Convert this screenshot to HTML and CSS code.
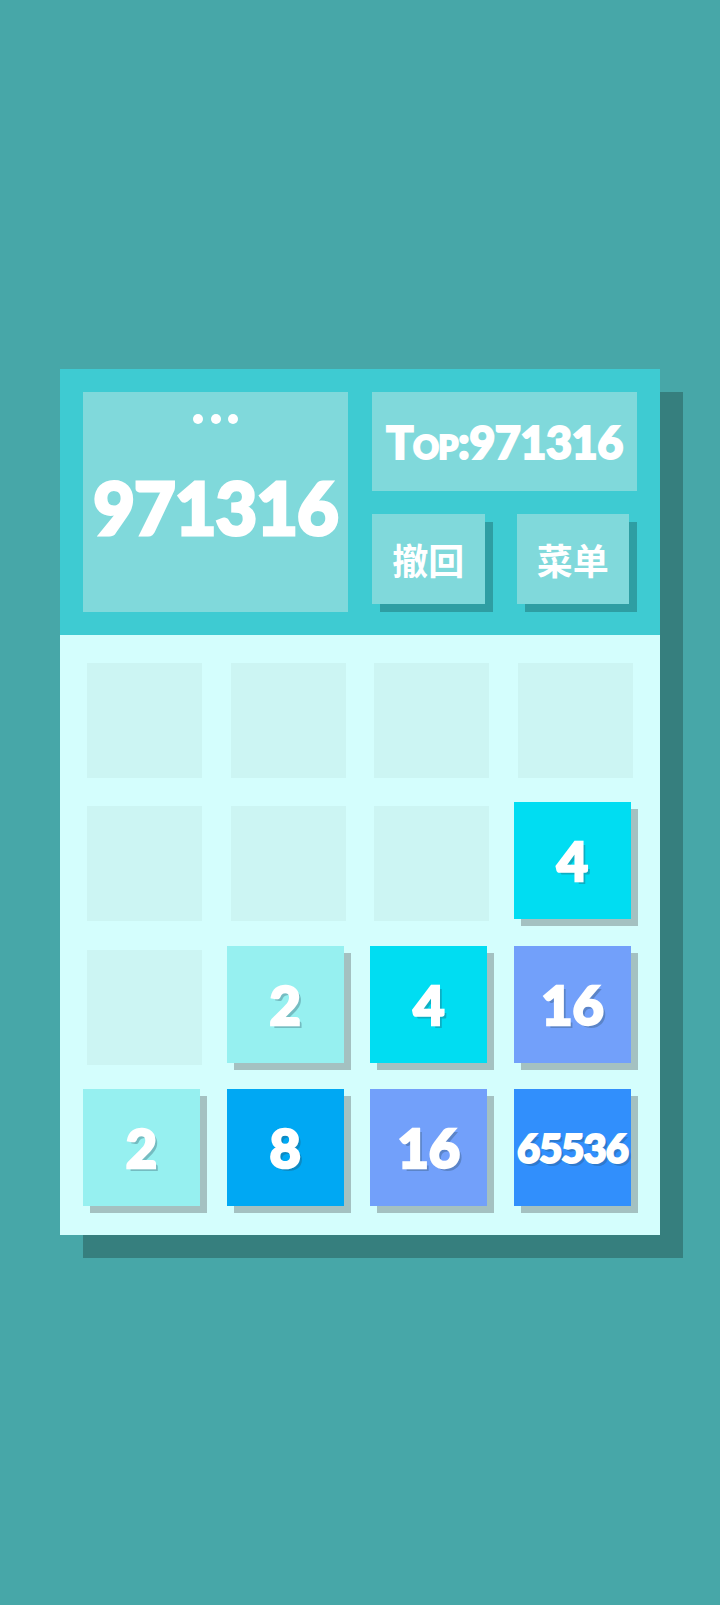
FILE: index.html
```html
<!DOCTYPE html>
<html lang="zh">
<head>
<meta charset="utf-8">
<title>2048</title>
<link rel="stylesheet" href="styles.css">
</head>
<body>
<div class="panel">
  <div class="header">
    <div class="score-box">
      <div class="dots"><span></span><span></span><span></span></div>
      <div class="score">971316</div>
    </div>
    <div class="side">
      <div class="top-box">Top:971316</div>
      <div class="buttons">
        <div class="btn">撤回</div>
        <div class="btn">菜单</div>
      </div>
    </div>
  </div>
  <div class="board">
    <div class="cell"></div>
    <div class="cell"></div>
    <div class="cell"></div>
    <div class="cell"></div>

    <div class="cell"></div>
    <div class="cell"></div>
    <div class="cell"></div>
    <div class="cell filled"><div class="tile t4">4</div></div>

    <div class="cell"></div>
    <div class="cell filled"><div class="tile t2">2</div></div>
    <div class="cell filled"><div class="tile t4">4</div></div>
    <div class="cell filled"><div class="tile t16">16</div></div>

    <div class="cell filled"><div class="tile t2">2</div></div>
    <div class="cell filled"><div class="tile t8">8</div></div>
    <div class="cell filled"><div class="tile t16">16</div></div>
    <div class="cell filled"><div class="tile t65536">65536</div></div>
  </div>
</div>
</body>
</html>
```

FILE: styles.css
```css
html, body {
  margin: 0;
  padding: 0;
}
body {
  background: #47a7a8;
  min-height: 1605px;
  padding: 369px 0 0 60px;
  box-sizing: border-box;
  font-family: "Lato", "Open Sans", "Noto Sans CJK SC", sans-serif;
}
.panel {
  width: 600px;
  box-shadow: 23px 23px 0 #367f7e;
}
.header {
  background: #3ecbd2;
  display: grid;
  grid-template-columns: 265px 265px;
  column-gap: 24px;
  padding: 23px;
  height: 266px;
  box-sizing: border-box;
}
.score-box {
  background: #80d9db;
  display: flex;
  flex-direction: column;
  align-items: center;
  padding-top: 22px;
  box-sizing: border-box;
}
.dots {
  display: flex;
  gap: 7.8px;
}
.dots span {
  width: 10px;
  height: 10px;
  border-radius: 50%;
  background: #ffffff;
}
.score {
  margin-top: 47px;
  color: #ffffff;
  font-weight: 900;
  font-size: 72px;
  line-height: 72px;
  letter-spacing: -1px;
  -webkit-text-stroke: 3px #ffffff;
}
.side {
  display: flex;
  flex-direction: column;
}
.top-box {
  background: #80d9db;
  height: 99px;
  display: flex;
  align-items: center;
  justify-content: center;
  color: #ffffff;
  font-weight: 900;
  font-size: 45px;
  font-variant: small-caps;
  letter-spacing: -0.5px;
  -webkit-text-stroke: 2px #ffffff;
}
.buttons {
  margin-top: 23px;
  display: flex;
  justify-content: space-between;
}
.btn {
  width: 112.5px;
  height: 90px;
  margin-right: 8px;
  background: #80d9db;
  box-shadow: 8px 8px 0 #2e9ea3;
  display: flex;
  align-items: center;
  justify-content: center;
  color: #ffffff;
  font-family: "Noto Sans CJK SC", sans-serif;
  font-weight: 700;
  font-size: 36px;
}
.board {
  background: #d4fefd;
  height: 600px;
  box-sizing: border-box;
  padding: 28px 27px 27px 27px;
  display: grid;
  grid-template-columns: repeat(4, 115px);
  grid-auto-rows: 115px;
  column-gap: 28.67px;
  row-gap: 28.4px;
}
.cell {
  background: #ccf5f3;
}
.cell.filled {
  background: transparent;
}
.tile {
  width: 117px;
  height: 117px;
  margin: -4px 0 0 -4px;
  box-shadow: 7px 7px 0 #a4c1c1;
  display: flex;
  align-items: center;
  justify-content: center;
  color: #ffffff;
  font-weight: 900;
  font-size: 54px;
  -webkit-text-stroke: 2.5px #ffffff;
  text-shadow: 3px 3px 0 rgba(40, 70, 85, 0.3);
}
.t2 { background: #96f0f0; }
.t4 { background: #00ddf2; }
.t8 { background: #00a8f3; }
.t16 { background: #72a0fa; }
.t65536 {
  background: #318ffc;
  font-size: 40px;
  letter-spacing: -1px;
  -webkit-text-stroke: 2px #ffffff;
}
```
